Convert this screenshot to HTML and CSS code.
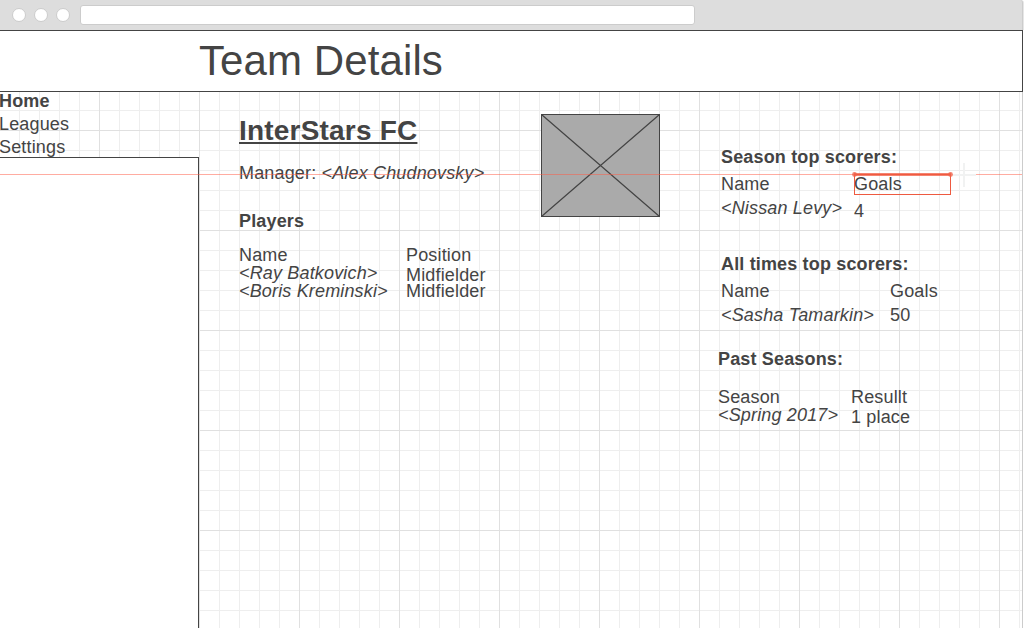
FILE: index.html
```html
<!DOCTYPE html>
<html lang="en">
<head>
<meta charset="utf-8">
<title>Team Details</title>
<link rel="stylesheet" href="styles.css">
</head>
<body>
<div class="window">
  <div class="toolbar">
    <span class="dot"></span><span class="dot"></span><span class="dot"></span>
    <div class="address"></div>
  </div>
  <header class="header"><h1>Team Details</h1></header>
  <div class="body">
    <aside class="sidebar">
      <nav class="nav"><b>Home</b><span>Leagues</span><span>Settings</span></nav>
      <div class="panel"></div>
    </aside>
    <main class="team">
      <h2>InterStars FC</h2>
      <p class="manager">Manager: <i>&lt;Alex Chudnovsky&gt;</i></p>
      <h3>Players</h3>
      <div class="table players">
        <div class="col"><span>Name</span><i>&lt;Ray Batkovich&gt;</i><i>&lt;Boris Kreminski&gt;</i></div>
        <div class="col"><span>Position</span><span class="low">Midfielder</span><span>Midfielder</span></div>
      </div>
    </main>
    <svg class="picture" width="119" height="103" viewBox="0 0 119 103">
      <rect x=".5" y=".5" width="118" height="102" fill="#aaa" stroke="#444"/>
      <path d="M.5 .5L118.5 102.5M118.5 .5L.5 102.5" stroke="#444" stroke-width="1.2" fill="none"/>
    </svg>
    <section class="stats">
      <h3>Season top scorers:</h3>
      <div class="table scorers">
        <div class="col"><span>Name</span><i>&lt;Nissan Levy&gt;</i></div>
        <div class="col"><span>Goals</span><span class="goals">4</span></div>
      </div>
      <h3>All times top scorers:</h3>
      <div class="table all-time">
        <div class="col"><span>Name</span><i>&lt;Sasha Tamarkin&gt;</i></div>
        <div class="col"><span>Goals</span><span>50</span></div>
      </div>
      <div class="past">
        <h3>Past Seasons:</h3>
        <div class="table seasons">
          <div class="col"><span>Season</span><i>&lt;Spring 2017&gt;</i></div>
          <div class="col"><span>Resullt</span><span class="low">1 place</span></div>
        </div>
      </div>
    </section>
  </div>
  <svg class="guides" width="1024" height="40" viewBox="0 0 1024 40">
    <path d="M0 14.5H854M976 14.5H1022" stroke="#ff5a43" stroke-opacity=".5"/>
    <path d="M952 15H976M964 3V27" stroke="#f1f2f2" stroke-width="2"/>
    <rect x="854.5" y="14.5" width="96" height="20" fill="none" stroke="#ee5a40"/>
    <path d="M854 14.5H951" stroke="#f05a40" stroke-width="2.6"/>
    <circle cx="854.5" cy="14.5" r="2.4" fill="#f0634b" fill-opacity=".8"/>
    <circle cx="950.5" cy="14.5" r="2.4" fill="#f0634b" fill-opacity=".8"/>
  </svg>
</div>
</body>
</html>
```

FILE: styles.css
```css
* { box-sizing: border-box; }
body {
  margin: 0;
  overflow: hidden;
  background: #fff;
  color: #444;
  font: 18px/20px "Liberation Sans", Arial, sans-serif;
  letter-spacing: .16px;
}
h1, h2, h3, p { margin: 0; }
h1 {
  font: 42px/60px "Liberation Sans", Arial, sans-serif;
  letter-spacing: .1px;
}
h2 {
  font-size: 28px;
  line-height: 32px;
  letter-spacing: .2px;
  text-decoration: underline;
}
h3 { font-size: 18px; line-height: 20px; }

.window {
  position: relative;
  display: flex;
  flex-direction: column;
  width: 1023px;
  height: 628px;
}
.toolbar {
  display: flex;
  align-items: center;
  gap: 8px;
  height: 30px;
  padding-left: 12px;
  background: #ddd;
  border-right: 1px solid #ccc;
  border-top-right-radius: 3px;
  box-shadow: 1px 0 #e6e6e6;
}
.dot {
  width: 14px;
  height: 14px;
  border: 1px solid #ccc;
  border-radius: 50%;
  background: #fff;
}
.address {
  width: 615px;
  height: 20px;
  margin-left: 2px;
  border: 1px solid #ccc;
  border-radius: 3px;
  background: #fff;
}
.header {
  height: 62px;
  padding-left: 199px;
  border: 1px solid #444;
  border-left: 0;
  background: #fff;
}
.body {
  display: flex;
  align-items: flex-start;
  height: 536px;
  border-right: 1px solid #ccc;
  background-color: #fff;
  background-image:
    linear-gradient(90deg, #e0e0e0 1px, transparent 1px),
    linear-gradient(#e0e0e0 1px, transparent 1px),
    linear-gradient(90deg, #eee 1px, transparent 1px),
    linear-gradient(#eee 1px, transparent 1px);
  background-size: 100px 100px, 100px 100px, 20px 20px, 20px 20px;
  background-position: 99px 0, 0 38px, 19px 0, 0 18px;
}
.sidebar {
  display: flex;
  flex-direction: column;
  width: 199px;
  height: 536px;
}
.nav {
  display: flex;
  flex-direction: column;
  gap: 3px;
  height: 65px;
  margin: -1px 0 0 -1px;
}
.panel {
  flex: 1;
  margin-top: 1px;
  border: solid #444;
  border-width: 1px 1px 0 0;
  background: #fff;
}
.team {
  width: 302px;
  margin-left: 40px;
  padding-top: 23px;
}
.manager { margin: 16px 0 28px; }
.table { display: grid; }
.col {
  display: flex;
  flex-direction: column;
  white-space: nowrap;
}
.col > * { height: 18px; }
.players {
  grid-template-columns: 167px auto;
  margin-top: 14px;
}
.col .low {
  height: 16px;
  margin-top: 2px;
}
.picture {
  display: block;
  flex: none;
  margin-top: 22px;
}
.stats {
  width: 260px;
  margin: 55px 0 0 61px;
}
.scorers, .all-time { margin-top: 7px; }
.scorers .col > *, .all-time .col > * { height: 24px; }
.scorers {
  grid-template-columns: 133px auto;
  height: 80px;
}
.scorers .col .goals { margin-top: 3px; }
.all-time { grid-template-columns: 169px auto; }
.past { margin: 20px 0 0 -3px; }
.seasons {
  grid-template-columns: 133px auto;
  margin-top: 18px;
}
.guides {
  position: absolute;
  left: 0;
  top: 160px;
}
```
